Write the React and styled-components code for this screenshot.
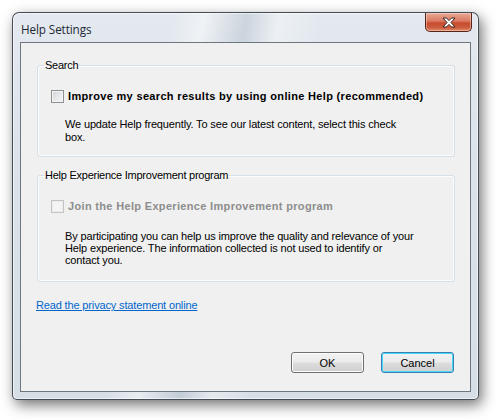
import React, { useState } from "react";
import styled, { createGlobalStyle } from "styled-components";

const GlobalStyle = createGlobalStyle`
    html, body {
        margin: 0;
        background: #ffffff;
    }
    body {
        font-family: "Liberation Sans", Arial, sans-serif;
    }
`;

const Page = styled.div`
    width: 498px;
    height: 420px;
    padding: 12px 0 0 12px;
    box-sizing: border-box;
`;

const Window = styled.div`
    width: 467px;
    height: 388px;
    box-sizing: border-box;
    display: flex;
    flex-direction: column;
    border: 1px solid rgba(40, 48, 58, 0.85);
    border-radius: 7px 7px 5px 5px;
    padding: 0 7px 7px 7px;
    background:
        linear-gradient(100deg,
            rgba(255, 255, 255, 0) 0%,
            rgba(255, 255, 255, 0) 30%,
            rgba(255, 255, 255, 0.45) 36%,
            rgba(160, 172, 186, 0.35) 44%,
            rgba(255, 255, 255, 0.35) 50%,
            rgba(255, 255, 255, 0) 58%),
        linear-gradient(180deg, #e3e9ef 0%, #dbe2e9 40%, #d6dee6 100%);
    box-shadow:
        inset 0 0 0 1px rgba(255, 255, 255, 0.6),
        3px 5px 14px rgba(0, 0, 0, 0.55);
`;

const TitleBar = styled.div`
    height: 29px;
    display: flex;
    align-items: flex-start;
    justify-content: space-between;
`;

const Title = styled.div`
    margin: 8px 0 0 1px;
    font-family: "Open Sans", "Noto Sans", sans-serif;
    font-size: 11.7px;
    color: #1c2733;
    letter-spacing: -0.1px;
`;

const CloseButton = styled.button`
    width: 47px;
    height: 19px;
    margin: 0 -1px 0 0;
    padding: 0;
    display: flex;
    align-items: center;
    justify-content: center;
    border: 1px solid #5a2418;
    border-top: none;
    border-radius: 0 0 5px 5px;
    background: linear-gradient(180deg, #eaa896 0%, #d97a62 45%, #c84c2e 55%, #cc5a3c 80%, #e38e6c 100%);
    box-shadow: inset 0 0 0 1px rgba(255, 255, 255, 0.35);
    cursor: pointer;
`;

const Client = styled.div`
    flex: 1;
    display: flex;
    flex-direction: column;
    background: #f0f0f0;
    border: 1px solid #6e7680;
    padding: 16px 15px 18px 16px;
    box-sizing: border-box;
`;

const GroupBox = styled.fieldset`
    margin: 0 0 ${(p) => p.$gap || 0}px 0;
    padding: 0 0 ${(p) => p.$pad || 11}px 0;
    border: 1px solid #d5dfe5;
    border-radius: 3px;
    box-shadow: inset 0 0 0 1px #fbfcfd;
    min-width: 0;
`;

const Legend = styled.legend`
    margin-left: 6px;
    padding: 0 1px;
    font-size: 11px;
    line-height: 13px;
    letter-spacing: -0.25px;
    color: #000000;
`;

const CheckRow = styled.label`
    display: flex;
    align-items: center;
    gap: 4px;
    margin: 18px 0 0 13px;
    font-size: 11px;
    font-weight: bold;
    line-height: 13px;
    letter-spacing: 0.33px;
    color: ${(p) => (p.$disabled ? "#8d8d8d" : "#000000")};
    cursor: ${(p) => (p.$disabled ? "default" : "pointer")};
`;

const Box = styled.span`
    width: 11px;
    height: 11px;
    flex: none;
    border: 1px solid ${(p) => (p.$disabled ? "#c4c4c4" : "#8e8f8f")};
    background: ${(p) =>
        p.$disabled
            ? "#f4f4f4"
            : "linear-gradient(135deg, #cbcfd5 0%, #e6e8eb 50%, #f6f6f6 100%)"};
    box-shadow: inset 0 0 0 1px ${(p) => (p.$disabled ? "#ebebeb" : "#f4f4f4")};
    display: flex;
    align-items: center;
    justify-content: center;
`;

const Description = styled.div`
    margin: ${(p) => p.$top || 15}px 0 0 27px;
    font-size: 11px;
    line-height: ${(p) => p.$lh || 13}px;
    letter-spacing: -0.15px;
    color: #000000;
`;

const Line = styled.span`
    display: block;
    white-space: nowrap;
`;

const Link = styled.a`
    margin: 0 0 0 -1px;
    font-size: 11px;
    line-height: 13px;
    letter-spacing: -0.15px;
    color: #0066cc;
    text-decoration: underline;
    cursor: pointer;
    align-self: flex-start;
`;

const Footer = styled.div`
    margin-top: auto;
    display: flex;
    justify-content: flex-end;
    gap: 17px;
    padding-right: 1px;
`;

const Button = styled.button`
    width: 73px;
    height: 21px;
    padding: 0;
    font-family: "Liberation Sans", Arial, sans-serif;
    font-size: 11px;
    color: #000000;
    border: 1px solid ${(p) => (p.$default ? "#3c7fb1" : "#707070")};
    border-radius: 3px;
    background: linear-gradient(180deg, #f2f2f2 0%, #ebebeb 48%, #dddddd 52%, #cfcfcf 100%);
    box-shadow: inset 0 0 0 1px ${(p) => (p.$default ? "#48d8fb" : "#fcfcfc")};
    cursor: pointer;
`;

const CloseGlyph = () => (
    <svg width="14" height="11" viewBox="0 0 14 11">
        <path
            d="M1 1 H4.5 L7 3.6 L9.5 1 H13 L9 5.5 L13 10 H9.5 L7 7.4 L4.5 10 H1 L5 5.5 Z"
            fill="#ffffff"
            stroke="#3a2420"
            strokeWidth="1"
            strokeLinejoin="round"
        />
    </svg>
);

const CheckBox = ({ disabled, checked, onToggle, children }) => (
    <CheckRow $disabled={disabled} onClick={() => !disabled && onToggle()}>
        <Box $disabled={disabled}>
            {checked && (
                <svg width="9" height="9" viewBox="0 0 9 9">
                    <path d="M1 4.5 L3.5 7 L8 1.5" fill="none" stroke="#1b3a6b" strokeWidth="1.6" />
                </svg>
            )}
        </Box>
        {children}
    </CheckRow>
);

const App = () => {
    const [online, setOnline] = useState(false);

    return (
        <>
            <GlobalStyle />
            <Page>
                <Window>
                    <TitleBar>
                        <Title>Help Settings</Title>
                        <CloseButton aria-label="Close">
                            <CloseGlyph />
                        </CloseButton>
                    </TitleBar>
                    <Client>
                        <GroupBox $gap={12} $pad={12}>
                            <Legend>Search</Legend>
                            <CheckBox checked={online} onToggle={() => setOnline(!online)}>
                                Improve my search results by using online Help (recommended)
                            </CheckBox>
                            <Description>
                                <Line>We update Help frequently. To see our latest content, select this check</Line>
                                <Line>box.</Line>
                            </Description>
                        </GroupBox>
                        <GroupBox $gap={17} $pad={15}>
                            <Legend>Help Experience Improvement program</Legend>
                            <CheckBox disabled>Join the Help Experience Improvement program</CheckBox>
                            <Description $top={17} $lh={12}>
                                <Line>By participating you can help us improve the quality and relevance of your</Line>
                                <Line>Help experience. The information collected is not used to identify or</Line>
                                <Line>contact you.</Line>
                            </Description>
                        </GroupBox>
                        <Link>Read the privacy statement online</Link>
                        <Footer>
                            <Button>OK</Button>
                            <Button $default>Cancel</Button>
                        </Footer>
                    </Client>
                </Window>
            </Page>
        </>
    );
};

export default App;
